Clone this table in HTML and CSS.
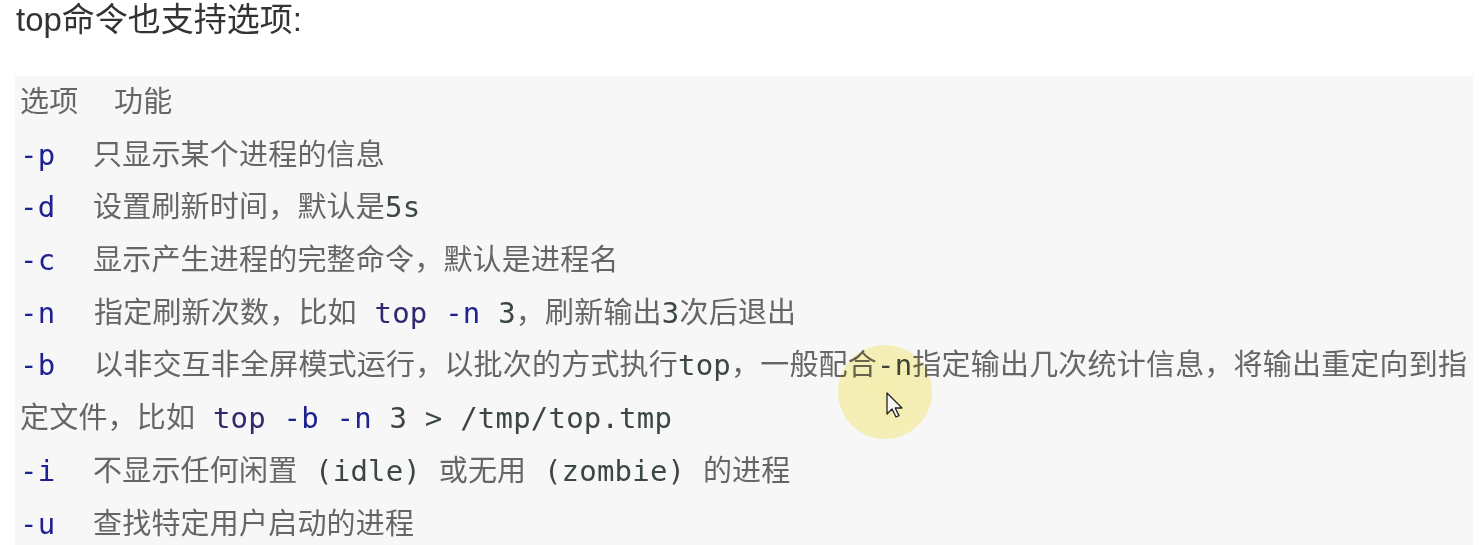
FILE: index.html
```html
<!DOCTYPE html>
<html lang="zh-CN">
<head>
  <meta charset="UTF-8">
  <title>top命令选项</title>
  <link rel="stylesheet" href="styles.css">
</head>
<body>

<p class="intro">top命令也支持选项:</p>

<div class="code-block">
  <div class="line head"><span class="opt">选项</span><span>功能</span></div>
  <div class="line"><span class="opt flag">-p</span>只显示某个进程的信息</div>
  <div class="line"><span class="opt flag">-d</span>设置刷新时间，默认是<span class="num">5s</span></div>
  <div class="line"><span class="opt flag">-c</span>显示产生进程的完整命令，默认是进程名</div>
  <div class="line"><span class="opt flag wide">-n</span>指定刷新次数，比如 <span class="cmd">top</span> <span class="flag">-n</span> <span class="num">3</span>，刷新输出<span class="num">3</span>次后退出</div>
  <div class="line"><span class="opt flag wide">-b</span>以非交互非全屏模式运行，以批次的方式执行<span class="num">top</span>，一般配合<span class="num">-n</span>指定输出几次统计信息，将输出重定向到指</div>
  <div class="line">定文件，比如 <span class="cmd">top</span> <span class="flag">-b</span> <span class="flag">-n</span> <span class="num">3 &gt; /tmp/top.tmp</span></div>
  <div class="line"><span class="opt flag">-i</span>不显示任何闲置 <span class="num">(idle)</span> 或无用 <span class="num">(zombie)</span> 的进程</div>
  <div class="line"><span class="opt flag">-u</span>查找特定用户启动的进程</div>
</div>

<div class="pointer">
  <svg width="30" height="30" viewBox="0 0 30 30">
    <path d="M2 1 L2 22 L7 17 L11 25 L14 23.6 L10.2 16 L17 16 Z" fill="#fff" stroke="#222" stroke-width="1.3" stroke-linejoin="round"/>
  </svg>
</div>

</body>
</html>
```

FILE: styles.css
```css
body {
  margin: 0;
  padding: 0 6px 0 15px;
  background: #fff;
  font-family: "Liberation Sans", "Noto Sans CJK SC", sans-serif;
  overflow: hidden;
}
.intro {
  margin: 0 0 36px 1px;
  font-size: 33px;
  line-height: 40px;
  color: #333;
}
.code-block {
  background: #f7f7f7;
  padding: 0 0 10px 5px;
  font-family: "DejaVu Sans Mono", "Noto Sans CJK SC", monospace;
  font-size: 29px;
  color: #666;
}
.line {
  height: 52.7px;
  line-height: 52.7px;
  white-space: pre;
  letter-spacing: 0.2px;
}
.opt {
  display: inline-block;
  width: 73px;
}
.head .opt {
  width: 94px;
}
.opt.wide {
  width: 74px;
}
.flag {
  color: #1d2290;
}
.cmd {
  color: #2f2a6e;
}
.num {
  color: #3c4744;
}
.pointer {
  position: absolute;
  left: 838px;
  top: 345px;
  width: 94px;
  height: 94px;
  border-radius: 50%;
  background: radial-gradient(circle, rgba(250, 236, 110, 0.5) 0%, rgba(250, 236, 110, 0.45) 80%, rgba(250, 236, 110, 0) 100%);
  mix-blend-mode: multiply;
}
.pointer svg {
  position: absolute;
  left: 47px;
  top: 47px;
}
```
